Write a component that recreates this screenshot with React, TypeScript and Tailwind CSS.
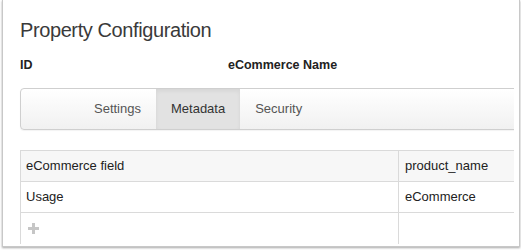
const tabs = ['Settings', 'Metadata', 'Security'];

const rows = [
  { field: 'eCommerce field', value: 'product_name', head: true },
  { field: 'Usage', value: 'eCommerce', head: false },
];

const App = () => {
  return (
    <div className="h-[250px] w-[521px] bg-white font-['Liberation_Sans',Arial,sans-serif]">
      <div className="ml-[2px] flex h-[247px] w-[518px] border-x border-b border-[#c8c8c8] shadow-[0_1px_2px_rgba(0,0,0,0.35)]">
        <div className="h-full w-[511px] overflow-hidden pl-[17px] pt-[17px]">
          <h1 className="text-[20px] leading-[26px] tracking-[-0.4px] text-[#3a3a3a]">Property Configuration</h1>
          <div className="mt-[15px] flex h-[14px] items-center text-[12.5px] font-bold text-[#222]">
            <span className="w-[208px]">ID</span>
            <span>eCommerce Name</span>
          </div>
          <div className="mt-[16px] flex h-[42px] w-[520px] rounded-l-[4px] border border-[#cfcfcf] bg-gradient-to-b from-white to-[#f1f1f1] pl-[58px] shadow-[0_1px_1px_rgba(0,0,0,0.05)]">
            {tabs.map((t) => (
              <div
                key={t}
                className={
                  t === 'Metadata'
                    ? 'flex items-center bg-[#e2e2e2] px-[15px] text-[13px] text-[#333] shadow-[inset_0_2px_4px_rgba(0,0,0,0.06)]'
                    : 'flex items-center px-[15px] text-[13px] text-[#555]'
                }
              >
                {t}
              </div>
            ))}
          </div>
          <div className="mt-[20px] w-[520px] border-t border-l border-[#dadada] text-[13px] text-[#222]">
            {rows.map((r) => (
              <div
                key={r.field}
                className={`flex h-[31px] border-b border-[#dadada] ${r.head ? 'bg-[#f7f7f7]' : 'bg-white'}`}
              >
                <div className="flex w-[378px] items-center border-r border-[#dadada] pl-[5px]">{r.field}</div>
                <div className="flex flex-1 items-center pl-[6px]">{r.value}</div>
              </div>
            ))}
            <div className="flex h-[31px]">
              <div className="flex w-[378px] items-center border-r border-[#dadada] pl-[7px]">
                <svg width="11" height="11" viewBox="0 0 11 11">
                  <path d="M4 0h3v4h4v3H7v4H4V7H0V4h4z" fill="#c6c6c6" />
                </svg>
              </div>
              <div className="flex-1" />
            </div>
          </div>
        </div>
      </div>
    </div>
  );
};

export default App;
